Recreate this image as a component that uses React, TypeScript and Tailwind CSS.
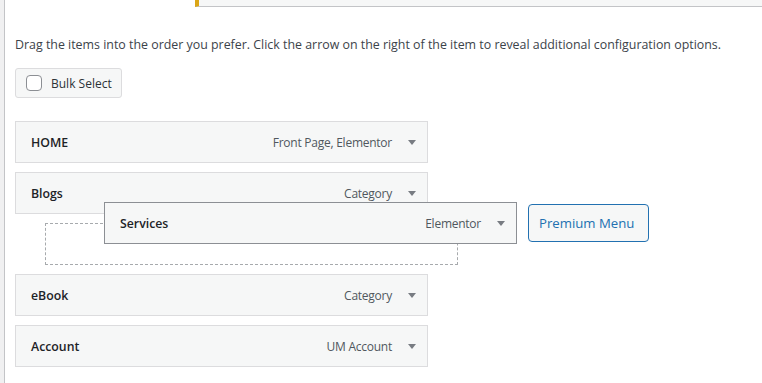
import React from "react";

const Arrow = () => (
  <svg width="8" height="5" viewBox="0 0 8 5" className="block">
    <path d="M0 0h8L4 5z" fill="#787c82" />
  </svg>
);

function Bar({ title, type, extra }: { title: string; type: string; extra?: string }) {
  return (
    <div
      className={
        "flex h-[42px] w-[413px] items-center justify-between bg-[#f6f7f7] pl-[15px] pr-[11px] " +
        (extra ?? "border border-[#dcdcde]")
      }
    >
      <span className="translate-y-[1px] text-[12.3px] font-semibold text-[#1d2327]">{title}</span>
      <span className="flex items-center gap-[16px] text-[12px] tracking-[-0.25px] text-[#50575e]">
        <span className="translate-y-[1px]">{type}</span>
        <Arrow />
      </span>
    </div>
  );
}

export default function App() {
  return (
    <div className="relative flex min-h-[383px] overflow-hidden bg-white font-['Open_Sans',sans-serif]">
      <div className="w-[5px] shrink-0 border-r border-[#c3c4c7] bg-[#f0f0f1]" />
      <div className="flex-1">
        <div className="ml-[190px] h-[7px] border-b border-l-4 border-b-[#c3c4c7] border-l-[#dba617] bg-[#f6f7f7]" />
        <p className="mt-[28px] pl-[10px] text-[12.4px] leading-[20px] text-[#3c434a]">
          Drag the items into the order you prefer. Click the arrow on the right of the item to reveal additional configuration options.
        </p>
        <div className="ml-[10px] mt-[13px] flex h-[30px] w-[107px] items-center gap-[9px] rounded-[3px] border border-[#dcdcde] bg-[#f6f7f7] pl-[10px]">
          <span className="h-[16px] w-[16px] rounded-[4px] border border-[#8c8f94] bg-white" />
          <span className="pt-[1px] text-[12px] text-[#2c3338]">Bulk Select</span>
        </div>
        <div className="ml-[10px] mt-[23px] flex flex-col gap-[9px]">
          <Bar title="HOME" type="Front Page, Elementor" />
          <Bar title="Blogs" type="Category" />
          <div className="ml-[30px] h-[42px] w-[413px] border border-dashed border-[#a7aaad]" />
          <Bar title="eBook" type="Category" />
          <Bar title="Account" type="UM Account" />
        </div>
      </div>
      <div className="absolute left-[104px] top-[202px]">
        <Bar title="Services" type="Elementor" extra="border border-[#8c8f94]" />
      </div>
      <div className="absolute left-[528px] top-[204px] flex h-[38px] w-[121px] items-center rounded-[4px] border border-[#2271b1] bg-[#f6f7f7] pl-[10px] pt-[2px] text-[13.2px] text-[#2271b1]">
        Premium Menu
      </div>
    </div>
  );
}
